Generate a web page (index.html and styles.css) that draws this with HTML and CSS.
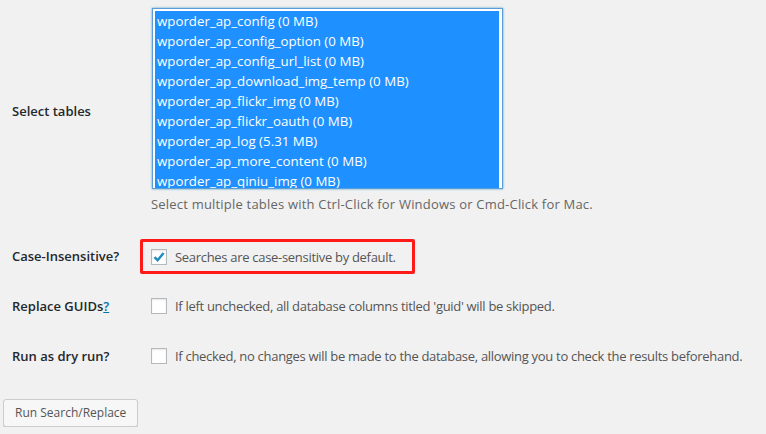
FILE: index.html
```html
<!DOCTYPE html>
<html lang="en">
<head>
    <meta charset="UTF-8">
    <meta name="viewport" content="width=device-width, initial-scale=1.0">
    <title>Search Replace DB</title>
    <link rel="stylesheet" href="styles.css">
</head>
<body>
    <form class="search-form">
        <table class="form-table">
            <tr class="row-tables">
                <th>Select tables</th>
                <td>
                    <div class="table-list" role="listbox" aria-multiselectable="true">
                        <div class="option" role="option" aria-selected="true">wporder_ap_config (0 MB)</div>
                        <div class="option" role="option" aria-selected="true">wporder_ap_config_option (0 MB)</div>
                        <div class="option" role="option" aria-selected="true">wporder_ap_config_url_list (0 MB)</div>
                        <div class="option" role="option" aria-selected="true">wporder_ap_download_img_temp (0 MB)</div>
                        <div class="option" role="option" aria-selected="true">wporder_ap_flickr_img (0 MB)</div>
                        <div class="option" role="option" aria-selected="true">wporder_ap_flickr_oauth (0 MB)</div>
                        <div class="option" role="option" aria-selected="true">wporder_ap_log (5.31 MB)</div>
                        <div class="option" role="option" aria-selected="true">wporder_ap_more_content (0 MB)</div>
                        <div class="option" role="option" aria-selected="true">wporder_ap_qiniu_img (0 MB)</div>
                    </div>
                    <p class="description">Select multiple tables with Ctrl-Click for Windows or Cmd-Click for Mac.</p>
                </td>
            </tr>
            <tr>
                <th>Case-Insensitive?</th>
                <td>
                    <label class="check highlight">
                        <span class="box checked">
                            <svg width="14" height="14" viewBox="0 0 14 14"><path d="M2.5 7.2 L5.6 10.3 L11.6 3" fill="none" stroke="#1e8cbe" stroke-width="2.4"/></svg>
                        </span>
                        Searches are case-sensitive by default.
                    </label>
                </td>
            </tr>
            <tr>
                <th>Replace GUIDs<a href="#" class="help">?</a></th>
                <td>
                    <label class="check"><span class="box"></span>If left unchecked, all database columns titled 'guid' will be skipped.</label>
                </td>
            </tr>
            <tr>
                <th>Run as dry run?</th>
                <td>
                    <label class="check"><span class="box"></span>If checked, no changes will be made to the database, allowing you to check the results beforehand.</label>
                </td>
            </tr>
        </table>
        <p class="submit"><button type="button" class="button">Run Search/Replace</button></p>
    </form>
</body>
</html>
```

FILE: styles.css
```css
body {
    margin: 0;
    background: #f1f1f1;
    color: #23282d;
    font-family: "Open Sans", "Noto Sans", sans-serif;
    font-size: 13px;
}

.search-form {
    padding-left: 3px;
}

.form-table {
    border-collapse: collapse;
}

.form-table th {
    width: 129px;
    padding: 0 0 0 9px;
    text-align: left;
    font-size: 13px;
    font-weight: 600;
    vertical-align: middle;
    height: 50px;
}

.form-table td {
    padding: 0 0 0 10px;
    vertical-align: middle;
}

.row-tables th {
    padding-bottom: 9px;
}

.row-tables td {
    padding-top: 8px;
    padding-bottom: 16px;
}

.help {
    color: #0073aa;
}

.table-list {
    box-sizing: border-box;
    width: 351px;
    height: 181px;
    margin-left: 1px;
    padding: 2px 3px 1px 2px;
    background: #fff;
    border: 1px solid #5b9dd9;
    box-shadow: 0 0 2px rgba(30, 140, 190, 0.8);
    overflow: hidden;
}

.table-list .option {
    height: 20px;
    line-height: 20px;
    padding-left: 2px;
    background: #1e90ff;
    color: #fff;
    font-size: 13.3px;
    white-space: nowrap;
}

.description {
    margin: 6px 0 0;
    color: #666;
    line-height: 1.5;
    letter-spacing: 0.2px;
}

.check {
    display: flex;
    align-items: center;
    gap: 8px;
    color: #555;
    letter-spacing: -0.3px;
    white-space: nowrap;
}

.box {
    box-sizing: border-box;
    flex: none;
    width: 16px;
    height: 16px;
    border: 1px solid #b4b9be;
    background: #fff;
    box-shadow: inset 0 1px 2px rgba(0, 0, 0, 0.1);
    display: flex;
    align-items: center;
    justify-content: center;
}

.highlight {
    box-sizing: border-box;
    width: 275px;
    height: 35px;
    margin: 0 0 -2px -11px;
    padding: 0 0 0 8px;
    border: 3px solid #ff1a1a;
    border-radius: 2px;
}

.submit {
    margin: 18px 0 0;
}

.button {
    height: 28px;
    padding: 0 11px 1px;
    font-family: inherit;
    font-size: 12px;
    color: #555;
    background: #f7f7f7;
    border: 1px solid #ccc;
    border-radius: 3px;
    box-shadow: 0 1px 0 #ccc;
    cursor: pointer;
}
```
